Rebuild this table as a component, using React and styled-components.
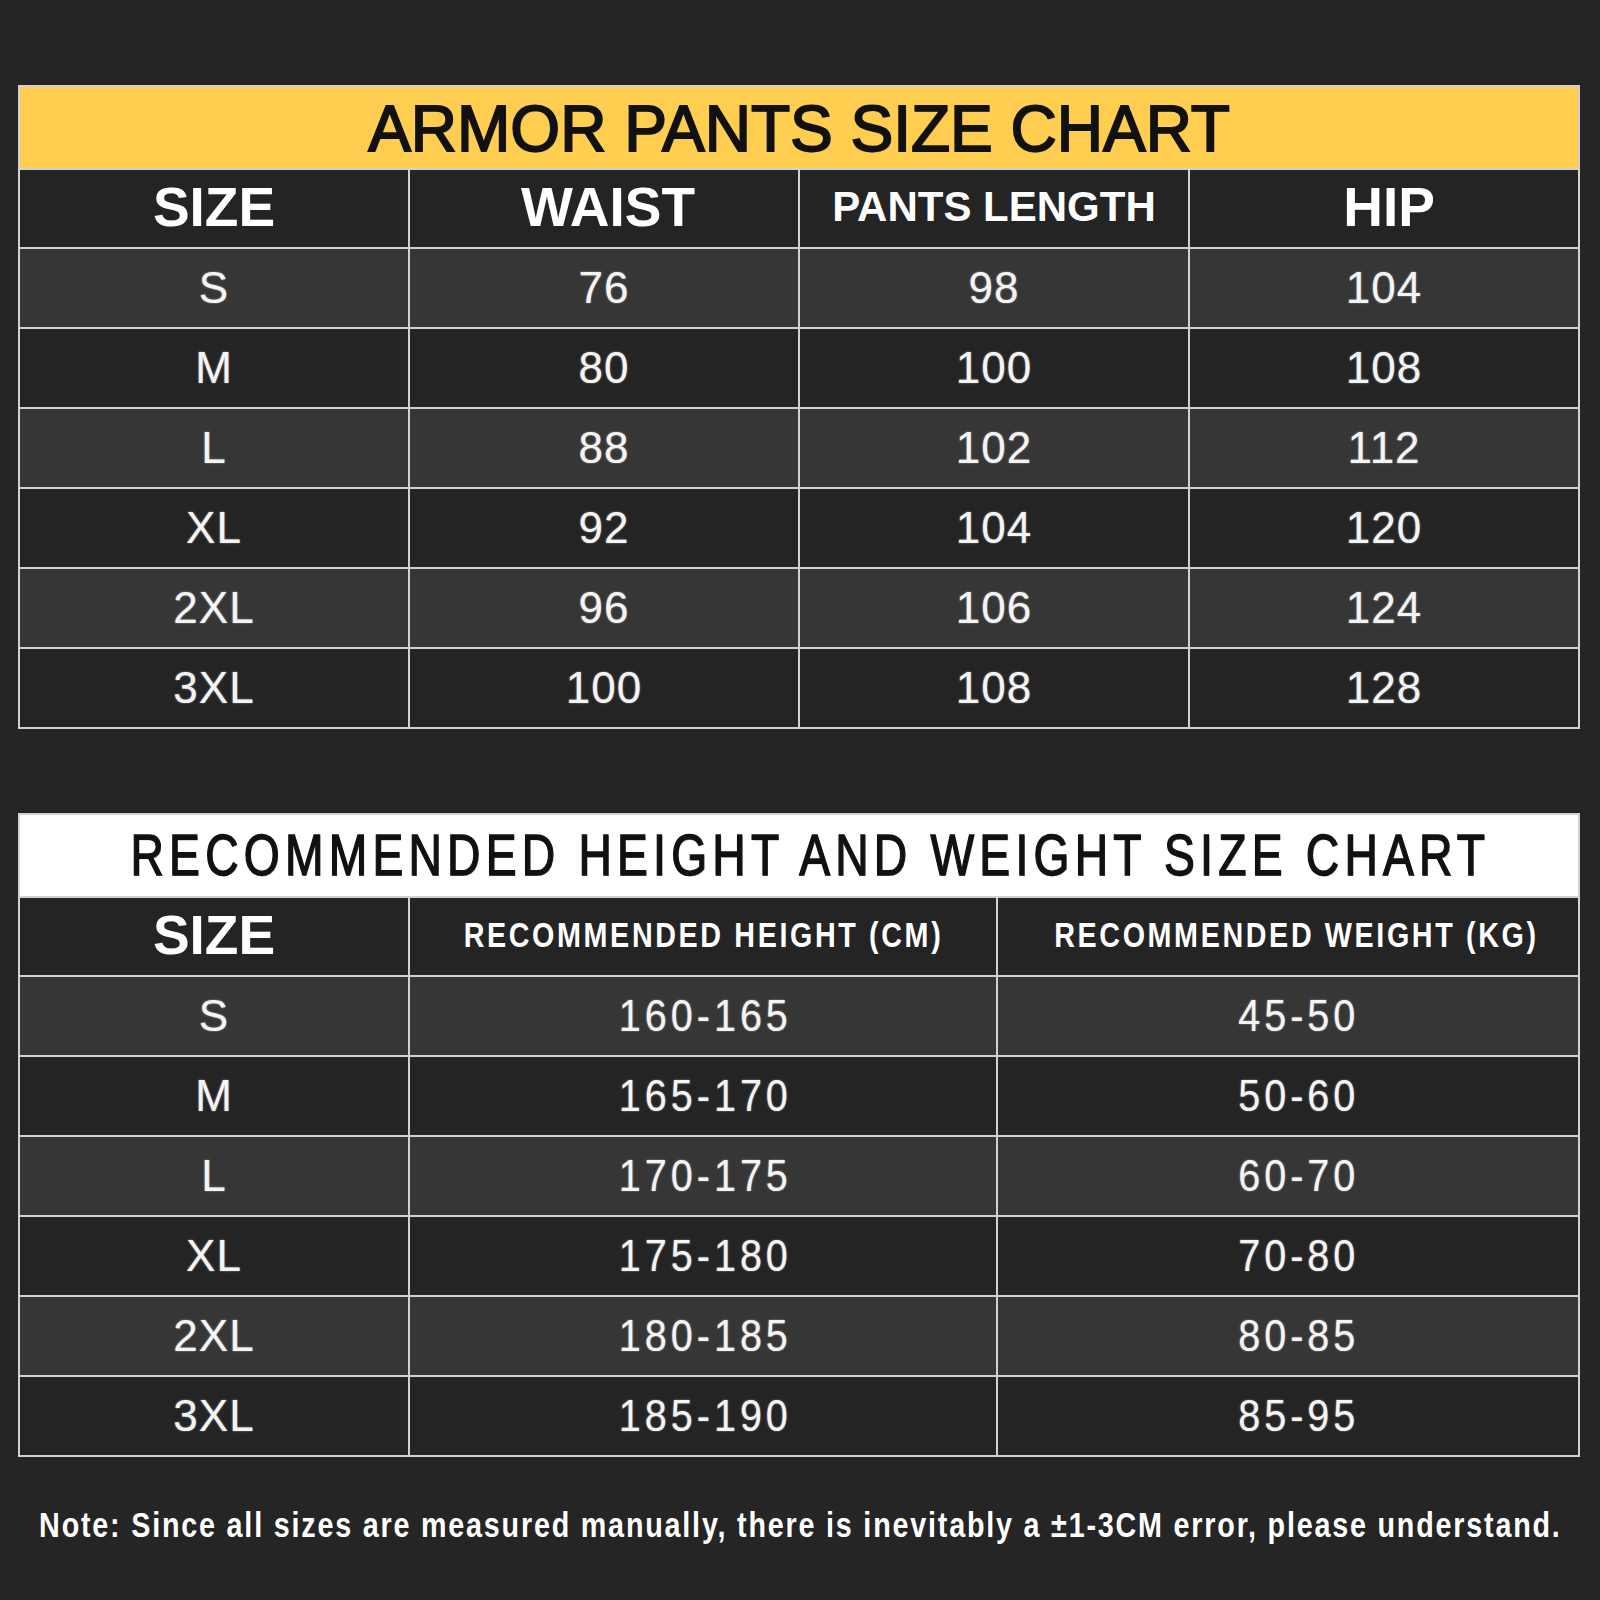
import React from "react";
import styled, { createGlobalStyle } from "styled-components";

const GlobalStyle = createGlobalStyle`
  html, body {
    margin: 0;
    padding: 0;
    background: #252525;
  }
  body {
    width: 1600px;
    min-height: 1600px;
    font-family: "Liberation Sans", Arial, sans-serif;
  }
`;

const Page = styled.div`
  box-sizing: border-box;
  width: 1600px;
  height: 1600px;
  padding: 85px 20px 0 18px;
  display: flex;
  flex-direction: column;
`;

const Tables = styled.div`
  display: flex;
  flex-direction: column;
  gap: 84px;
`;

const Table = styled.div`
  display: grid;
  grid-template-columns: ${(p) => p.$cols};
  gap: 2px;
  width: 1562px;
  box-sizing: border-box;
  border: 2px solid #d2d2d2;
  background: #d2d2d2;
`;

// condensed look: the narrow faces are not installed, so squeeze the glyphs
const Squeeze = styled.span`
  display: inline-block;
  white-space: nowrap;
  transform: scaleX(${(p) => p.$sx || 1});
  transform-origin: center;
`;

const Title = styled.div`
  grid-column: 1 / -1;
  height: 81px;
  box-sizing: border-box;
  background: ${(p) => p.$bg};
  display: flex;
  align-items: center;
  justify-content: center;
  overflow: hidden;
  color: #111;
  font-size: ${(p) => p.$size}px;
  letter-spacing: ${(p) => p.$spacing}px;
  -webkit-text-stroke: ${(p) => p.$stroke}px #111;
  text-shadow: 1px 1px 0 rgba(0, 0, 0, 0.35);
  padding: ${(p) => (p.$lift ? "0 0 2px" : "2px 0 0")};
  padding-left: ${(p) => p.$shift || 0}px;
`;

const HeadCell = styled.div`
  height: 77px;
  min-width: 0;
  overflow: hidden;
  box-sizing: border-box;
  padding-bottom: 4px;
  padding-left: ${(p) => p.$shift || 0}px;
  background: #242424;
  display: flex;
  align-items: center;
  justify-content: center;
  color: #fff;
  font-weight: 700;
  font-size: ${(p) => p.$size || 55}px;
  letter-spacing: ${(p) => p.$spacing || 0}px;
`;

const Cell = styled.div`
  height: 78px;
  min-width: 0;
  overflow: hidden;
  box-sizing: border-box;
  padding-left: ${(p) => p.$shift || 0}px;
  background: ${(p) => (p.$alt ? "#363636" : "#242424")};
  display: flex;
  align-items: center;
  justify-content: center;
  color: #f4f4f4;
  font-size: ${(p) => p.$size || 44}px;
  letter-spacing: ${(p) => p.$spacing || 1}px;
  text-shadow: 0 0 2px rgba(255, 255, 255, 0.55);
`;

const Note = styled.div`
  margin-top: 47px;
  width: 1600px;
  margin-left: -18px;
  display: flex;
  justify-content: center;
  color: #fff;
  font-weight: 700;
  font-size: 35px;
  line-height: 42px;
  letter-spacing: 2.2px;
`;

const pants = [
  ["S", "76", "98", "104"],
  ["M", "80", "100", "108"],
  ["L", "88", "102", "112"],
  ["XL", "92", "104", "120"],
  ["2XL", "96", "106", "124"],
  ["3XL", "100", "108", "128"],
];

const body = [
  ["S", "160-165", "45-50"],
  ["M", "165-170", "50-60"],
  ["L", "170-175", "60-70"],
  ["XL", "175-180", "70-80"],
  ["2XL", "180-185", "80-85"],
  ["3XL", "185-190", "85-95"],
];

export default function App() {
  return (
    <>
      <GlobalStyle />
      <Page>
        <Tables>
          <Table $cols="repeat(4, minmax(0, 1fr))">
            <Title $bg="#ffcd50" $size={64} $spacing={0} $stroke={1.8}>
              ARMOR PANTS SIZE CHART
            </Title>
            <HeadCell>SIZE</HeadCell>
            <HeadCell $shift={8}>WAIST</HeadCell>
            <HeadCell $size={42}>PANTS LENGTH</HeadCell>
            <HeadCell $shift={10}>HIP</HeadCell>
            {pants.map((row, i) =>
              row.map((v, j) => (
                <Cell key={`${i}-${j}`} $alt={i % 2 === 0}>
                  {v}
                </Cell>
              ))
            )}
          </Table>

          <Table $cols="388px 586px minmax(0, 1fr)">
            <Title
              $bg="#ffffff"
              $size={57}
              $spacing={6.5}
              $stroke={1.4}
              $shift={22}
              $lift
            >
              <Squeeze $sx={0.81}>RECOMMENDED HEIGHT AND WEIGHT SIZE CHART</Squeeze>
            </Title>
            <HeadCell>SIZE</HeadCell>
            <HeadCell $size={35} $spacing={3.2}>
              <Squeeze $sx={0.82}>RECOMMENDED HEIGHT (CM)</Squeeze>
            </HeadCell>
            <HeadCell $size={35} $spacing={3.2} $shift={16}>
              <Squeeze $sx={0.82}>RECOMMENDED WEIGHT (KG)</Squeeze>
            </HeadCell>
            {body.map((row, i) =>
              row.map((v, j) =>
                j === 0 ? (
                  <Cell key={`${i}-${j}`} $alt={i % 2 === 0}>
                    {v}
                  </Cell>
                ) : (
                  <Cell
                    key={`${i}-${j}`}
                    $alt={i % 2 === 0}
                    $size={45}
                    $spacing={4.5}
                    $shift={j === 2 ? 22 : 4}
                  >
                    <Squeeze $sx={0.88}>{v}</Squeeze>
                  </Cell>
                )
              )
            )}
          </Table>
        </Tables>
        <Note>
          <Squeeze $sx={0.82}>
            Note: Since all sizes are measured manually, there is inevitably a
            ±1-3CM error, please understand.
          </Squeeze>
        </Note>
      </Page>
    </>
  );
}
